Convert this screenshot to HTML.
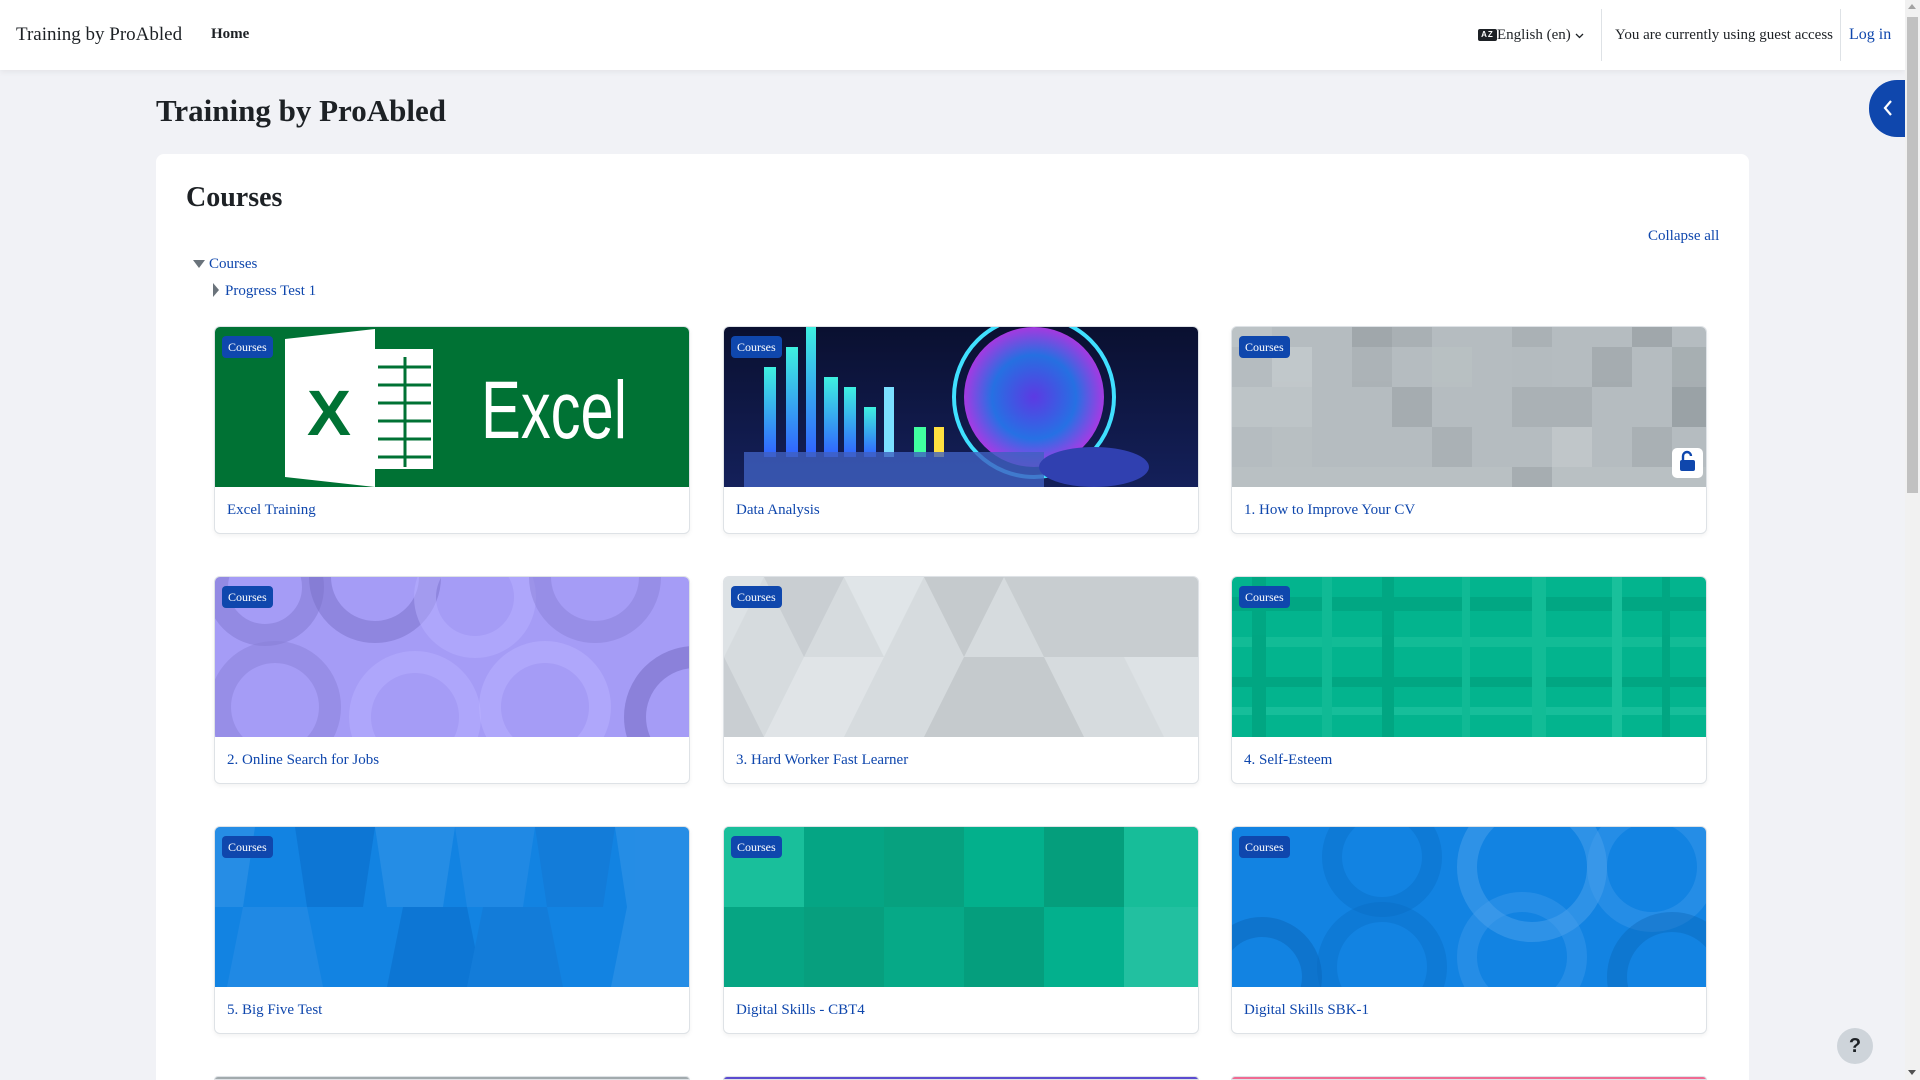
<!DOCTYPE html>
<html style="overflow:hidden;height:1080px"><head><meta charset="utf-8"><style>
*{box-sizing:border-box;margin:0;padding:0}
body{width:1920px;height:1080px;overflow:hidden;background:#f1f2f6;font-family:"Liberation Serif",serif;color:#1d2125;position:relative}
a{color:#0f47ad;text-decoration:none}
.hdr{position:absolute;left:0;top:0;width:1905px;height:70px;background:#fff;box-shadow:0 2px 6px rgba(0,0,0,.06)}
.abs{position:absolute;white-space:nowrap}
.sb{position:absolute;left:1905px;top:0;width:15px;height:1080px;background:#f1f1f1}
.thumb{position:absolute;left:1907px;top:17px;width:11px;height:476px;background:#c1c1c1}
.main{position:absolute;left:156px;top:154px;width:1593px;height:926px;background:#fff;border-radius:8px 8px 0 0}
.card{position:absolute;width:476px;height:208px;background:#fff;border:1px solid #dee2e6;border-radius:6px;overflow:hidden;box-shadow:0 2px 4px rgba(0,0,0,.05)}
.card .img{position:absolute;left:0;top:0;width:476px;height:160px;overflow:hidden}
.card .img svg{display:block}
.card .t{position:absolute;left:12px;top:175px;font-size:15px;color:#0f47ad}
.badge{position:absolute;left:7px;top:9px;background:#0f47ad;color:#fff;font-size:12px;padding:3px 6px;border-radius:4px;line-height:16px}
</style></head><body>
<div class="hdr">
 <div class="abs" style="left:16px;top:24px;font-size:19px;color:#1d2125">Training by ProAbled</div>
 <div class="abs" style="left:211px;top:26px;font-size:15px;font-weight:bold">Home</div>
 <div class="abs" style="left:1478px;top:29px;width:19px;height:12px;background:#1d2125;border-radius:2px;color:#fff;font:bold 8px 'Liberation Sans',sans-serif;line-height:12px;text-align:center;letter-spacing:1px">AZ</div>
 <div class="abs" style="left:1497px;top:27px;font-size:15px">English (en)</div>
 <svg class="abs" style="left:1575px;top:33px" width="9" height="6" viewBox="0 0 9 6"><path d="M1 1l3.5 3.5L8 1" stroke="#1d2125" stroke-width="1.3" fill="none"/></svg>
 <div class="abs" style="left:1601px;top:9px;width:1px;height:52px;background:#dee2e6"></div>
 <div class="abs" style="left:1615px;top:27px;font-size:15px">You are currently using guest access</div>
 <div class="abs" style="left:1840px;top:9px;width:1px;height:52px;background:#dee2e6"></div>
 <div class="abs" style="left:1849px;top:26px;font-size:16px;color:#0f47ad">Log in</div>
</div>
<div class="abs" style="left:1869px;top:80px;width:50px;height:57px;background:#0f47ad;border-radius:28px 0 0 28px"></div>
<svg class="abs" style="left:1882px;top:98px" width="12" height="20" viewBox="0 0 12 20"><path d="M9 3L3 10L9 17" stroke="#fff" stroke-width="2.2" fill="none"/></svg>
<div class="abs" style="left:156px;top:93px;font-size:31px;font-weight:bold">Training by ProAbled</div>
<div class="main"></div>
<div class="abs" style="left:186px;top:182px;font-size:28px;font-weight:bold">Courses</div>
<div class="abs" style="left:1648px;top:228px;font-size:15px;color:#0f47ad">Collapse all</div>
<div class="abs" style="left:193px;top:260px;width:0;height:0;border-left:6px solid transparent;border-right:6px solid transparent;border-top:8px solid #6a737b"></div>
<div class="abs" style="left:209px;top:256px;font-size:15px;color:#0f47ad">Courses</div>
<div class="abs" style="left:213px;top:283px;width:0;height:0;border-top:7px solid transparent;border-bottom:7px solid transparent;border-left:6px solid #6a737b"></div>
<div class="abs" style="left:225px;top:283px;font-size:15px;color:#0f47ad">Progress Test 1</div>

<!-- row1 -->
<div class="card" style="left:214px;top:326px"><div class="img" style="background:#007234">
<svg width="476" height="160"><polygon points="70,12 160,2 160,160 70,150" fill="#fff"/><rect x="160" y="22" width="58" height="120" fill="#fff"/><text x="92" y="108" font-family="Liberation Sans" font-weight="bold" font-size="64" fill="#007234" textLength="44" lengthAdjust="spacingAndGlyphs">X</text><g stroke="#007234" stroke-width="3"><line x1="163" y1="40" x2="216" y2="40"/><line x1="163" y1="58" x2="216" y2="58"/><line x1="163" y1="76" x2="216" y2="76"/><line x1="163" y1="94" x2="216" y2="94"/><line x1="163" y1="112" x2="216" y2="112"/><line x1="163" y1="130" x2="216" y2="130"/><line x1="190" y1="30" x2="190" y2="140"/></g><text x="266" y="111" font-family="Liberation Sans" font-size="82" fill="#fff" textLength="146" lengthAdjust="spacingAndGlyphs">Excel</text></svg>
</div><span class="badge">Courses</span><div class="t">Excel Training</div></div>

<div class="card" style="left:723px;top:326px"><div class="img" style="background:linear-gradient(180deg,#0a1030,#14205a)">
<svg width="476" height="160"><defs><linearGradient id="g1" x1="0" y1="0" x2="0" y2="1"><stop offset="0" stop-color="#3ef0e0"/><stop offset="1" stop-color="#3060ff"/></linearGradient><radialGradient id="g2"><stop offset="0" stop-color="#6a40ff"/><stop offset=".6" stop-color="#2a80ff"/><stop offset="1" stop-color="#c040ff"/></radialGradient></defs>
<rect x="40" y="40" width="12" height="90" fill="url(#g1)"/><rect x="62" y="20" width="12" height="110" fill="url(#g1)"/><rect x="82" y="0" width="10" height="130" fill="url(#g1)"/><rect x="100" y="50" width="14" height="80" fill="url(#g1)"/><rect x="120" y="60" width="12" height="70" fill="url(#g1)"/><rect x="140" y="80" width="12" height="50" fill="url(#g1)"/><rect x="160" y="60" width="10" height="70" fill="#7be0ff"/><rect x="190" y="100" width="12" height="30" fill="#40ffa0"/><rect x="210" y="100" width="10" height="30" fill="#ffe040"/>
<circle cx="310" cy="70" r="70" fill="url(#g2)" opacity=".85"/><circle cx="310" cy="70" r="80" fill="none" stroke="#40e0ff" stroke-width="4"/>
<rect x="20" y="125" width="300" height="35" fill="#4060c0" opacity=".8"/><ellipse cx="370" cy="140" rx="55" ry="20" fill="#3040b0"/></svg>
</div><span class="badge">Courses</span><div class="t">Data Analysis</div></div>

<div class="card" style="left:1231px;top:326px"><div class="img" style="background:#b5bcc0">
<svg width="476" height="160"><g opacity=".9">
<rect x="0" y="0" width="40" height="20" fill="#bcc3c6"/><rect x="120" y="0" width="40" height="20" fill="#9ea5a9"/><rect x="160" y="0" width="40" height="20" fill="#a8afb3"/><rect x="280" y="0" width="40" height="20" fill="#a9b0b4"/><rect x="400" y="0" width="40" height="20" fill="#9ea5a9"/>
<rect x="40" y="20" width="40" height="40" fill="#c3c9cc"/><rect x="120" y="20" width="40" height="40" fill="#abb2b6"/><rect x="200" y="20" width="40" height="40" fill="#b9c0c3"/><rect x="280" y="20" width="40" height="40" fill="#b4bbbf"/><rect x="360" y="20" width="40" height="40" fill="#a3aaae"/><rect x="440" y="20" width="36" height="40" fill="#a6adb1"/>
<rect x="0" y="60" width="80" height="40" fill="#bec5c8"/><rect x="160" y="60" width="40" height="40" fill="#a4abaf"/><rect x="280" y="60" width="80" height="40" fill="#a9b0b4"/><rect x="440" y="60" width="36" height="40" fill="#98a0a4"/>
<rect x="40" y="100" width="40" height="40" fill="#b9c0c3"/><rect x="200" y="100" width="40" height="40" fill="#a9b0b4"/><rect x="320" y="100" width="40" height="40" fill="#c2c8cb"/><rect x="400" y="100" width="40" height="40" fill="#a8afb3"/>
<rect x="0" y="140" width="476" height="20" fill="#bcc3c6" opacity=".6"/><rect x="280" y="140" width="40" height="20" fill="#a5acb0"/></g>
<rect x="440" y="121" width="31" height="30" rx="5" fill="#fff"/><rect x="448" y="133" width="15" height="11" rx="2" fill="#0f47ad"/><path d="M451 133v-4a4 4 0 0 1 8 0" stroke="#0f47ad" stroke-width="2.4" fill="none"/></svg>
</div><span class="badge">Courses</span><div class="t">1. How to Improve Your CV</div></div>

<!-- row2 -->
<div class="card" style="left:214px;top:576px"><div class="img" style="background:#a59cf6">
<svg width="476" height="160"><g fill="none" stroke-width="22"><circle cx="50" cy="10" r="48" stroke="#8278d0" opacity=".5"/><circle cx="160" cy="0" r="55" stroke="#7a70c8" opacity=".5"/><circle cx="260" cy="20" r="50" stroke="#b8b0ff" opacity=".5"/><circle cx="380" cy="0" r="55" stroke="#8a80d8" opacity=".5"/><circle cx="60" cy="130" r="55" stroke="#8a80d8" opacity=".5"/><circle cx="200" cy="140" r="55" stroke="#b8b0ff" opacity=".5"/><circle cx="330" cy="130" r="55" stroke="#bab2ff" opacity=".5"/><circle cx="480" cy="140" r="60" stroke="#7a70c8" opacity=".6"/></g></svg>
</div><span class="badge">Courses</span><div class="t">2. Online Search for Jobs</div></div>

<div class="card" style="left:723px;top:576px"><div class="img" style="background:#d6dbde">
<svg width="476" height="160"><polygon points="40,0 120,0 80,80" fill="#c9ced2"/><polygon points="200,0 280,0 240,80" fill="#c5cacd"/><polygon points="120,0 200,0 160,80" fill="#e0e5e8"/><polygon points="280,0 476,0 476,80 320,80" fill="#c8cdd0"/><polygon points="80,80 160,80 120,160 40,160" fill="#e0e4e7"/><polygon points="240,80 320,80 360,160 200,160" fill="#c5cacd"/><polygon points="0,80 40,160 0,160" fill="#c9ced2"/><polygon points="400,80 476,80 476,160 440,160" fill="#dde2e5"/><polygon points="0,0 40,0 0,80" fill="#dde2e5"/></svg>
</div><span class="badge">Courses</span><div class="t">3. Hard Worker Fast Learner</div></div>

<div class="card" style="left:1231px;top:576px"><div class="img" style="background:#03b48e">
<svg width="476" height="160"><g opacity=".5"><rect x="0" y="20" width="476" height="14" fill="#019a78"/><rect x="0" y="60" width="476" height="10" fill="#22c49e"/><rect x="0" y="100" width="476" height="10" fill="#019a78"/><rect x="0" y="130" width="476" height="8" fill="#2ac8a6"/><rect x="20" y="0" width="14" height="160" fill="#019a78"/><rect x="90" y="0" width="10" height="160" fill="#1ec09c"/><rect x="150" y="0" width="12" height="160" fill="#019a78"/><rect x="230" y="0" width="8" height="160" fill="#1ec09c"/><rect x="300" y="0" width="14" height="160" fill="#22c49e"/><rect x="380" y="0" width="10" height="160" fill="#30cca8"/><rect x="430" y="0" width="8" height="160" fill="#019a78"/></g></svg>
</div><span class="badge">Courses</span><div class="t">4. Self-Esteem</div></div>

<!-- row3 -->
<div class="card" style="left:214px;top:826px"><div class="img" style="background:#1283e2">
<svg width="476" height="160"><g opacity=".6"><polygon points="0,0 40,0 28,80 0,80" fill="#3394e8"/><polygon points="80,0 160,0 148,80 92,80" fill="#0a6fcc"/><polygon points="160,0 240,0 228,80 172,80" fill="#3394e8"/><polygon points="240,0 320,0 308,80 252,80" fill="#2a8ee6"/><polygon points="320,0 400,0 388,80 332,80" fill="#1579d4"/><polygon points="400,0 476,0 476,80 412,80" fill="#3394e8"/><polygon points="28,80 92,80 108,160 12,160" fill="#2a8ee6"/><polygon points="188,80 252,80 268,160 172,160" fill="#0a6fcc"/><polygon points="268,80 332,80 348,160 252,160" fill="#1579d4"/><polygon points="412,80 476,80 476,160 396,160" fill="#3394e8"/></g></svg>
</div><span class="badge">Courses</span><div class="t">5. Big Five Test</div></div>

<div class="card" style="left:723px;top:826px"><div class="img" style="background:#05a886">
<svg width="476" height="160"><rect x="0" y="0" width="80" height="80" fill="#19bf9b"/><rect x="80" y="0" width="80" height="80" fill="#05a584"/><rect x="160" y="0" width="80" height="80" fill="#07a17f"/><rect x="240" y="0" width="80" height="80" fill="#03b08c"/><rect x="320" y="0" width="80" height="80" fill="#059e7c"/><rect x="400" y="0" width="76" height="80" fill="#17bd99"/><rect x="0" y="80" width="80" height="80" fill="#06a583"/><rect x="80" y="80" width="80" height="80" fill="#079f7e"/><rect x="160" y="80" width="80" height="80" fill="#06a987"/><rect x="240" y="80" width="80" height="80" fill="#059e7d"/><rect x="320" y="80" width="80" height="80" fill="#03b08d"/><rect x="400" y="80" width="76" height="80" fill="#22c0a0"/></svg>
</div><span class="badge">Courses</span><div class="t">Digital Skills - CBT4</div></div>

<div class="card" style="left:1231px;top:826px"><div class="img" style="background:#1283e2">
<svg width="476" height="160"><g fill="none" stroke-width="20"><circle cx="150" cy="30" r="50" stroke="#0a6ac0" opacity=".35"/><circle cx="300" cy="40" r="65" stroke="#5aaaf0" opacity=".4"/><circle cx="420" cy="40" r="55" stroke="#4aa0ee" opacity=".35"/><circle cx="30" cy="150" r="50" stroke="#0a60b0" opacity=".4"/><circle cx="150" cy="140" r="55" stroke="#0a6ac0" opacity=".35"/><circle cx="290" cy="130" r="55" stroke="#4aa0ee" opacity=".35"/><circle cx="440" cy="150" r="55" stroke="#0a60b0" opacity=".35"/></g></svg>
</div><span class="badge">Courses</span><div class="t">Digital Skills SBK-1</div></div>

<!-- row4 -->
<div class="card" style="left:214px;top:1076px;height:4px;background:#a2aaad;border-radius:6px 6px 0 0"></div>
<div class="card" style="left:723px;top:1076px;height:4px;background:#5b4bd0;border-radius:6px 6px 0 0"></div>
<div class="card" style="left:1231px;top:1076px;height:4px;background:#f06a92;border-radius:6px 6px 0 0"></div>

<div class="abs" style="left:1837px;top:1028px;width:36px;height:36px;border-radius:50%;background:#ced4da;text-align:center;font:bold 20px 'Liberation Sans',sans-serif;line-height:36px;color:#1d2125">?</div>
<div class="sb"></div><div class="thumb"></div>
<div class="abs" style="left:1908px;top:4px;width:0;height:0;border-left:4px solid transparent;border-right:4px solid transparent;border-bottom:5px solid #a3a3a3"></div>
<div class="abs" style="left:1908px;top:1070px;width:0;height:0;border-left:4px solid transparent;border-right:4px solid transparent;border-top:5px solid #505050"></div>
</body></html>
